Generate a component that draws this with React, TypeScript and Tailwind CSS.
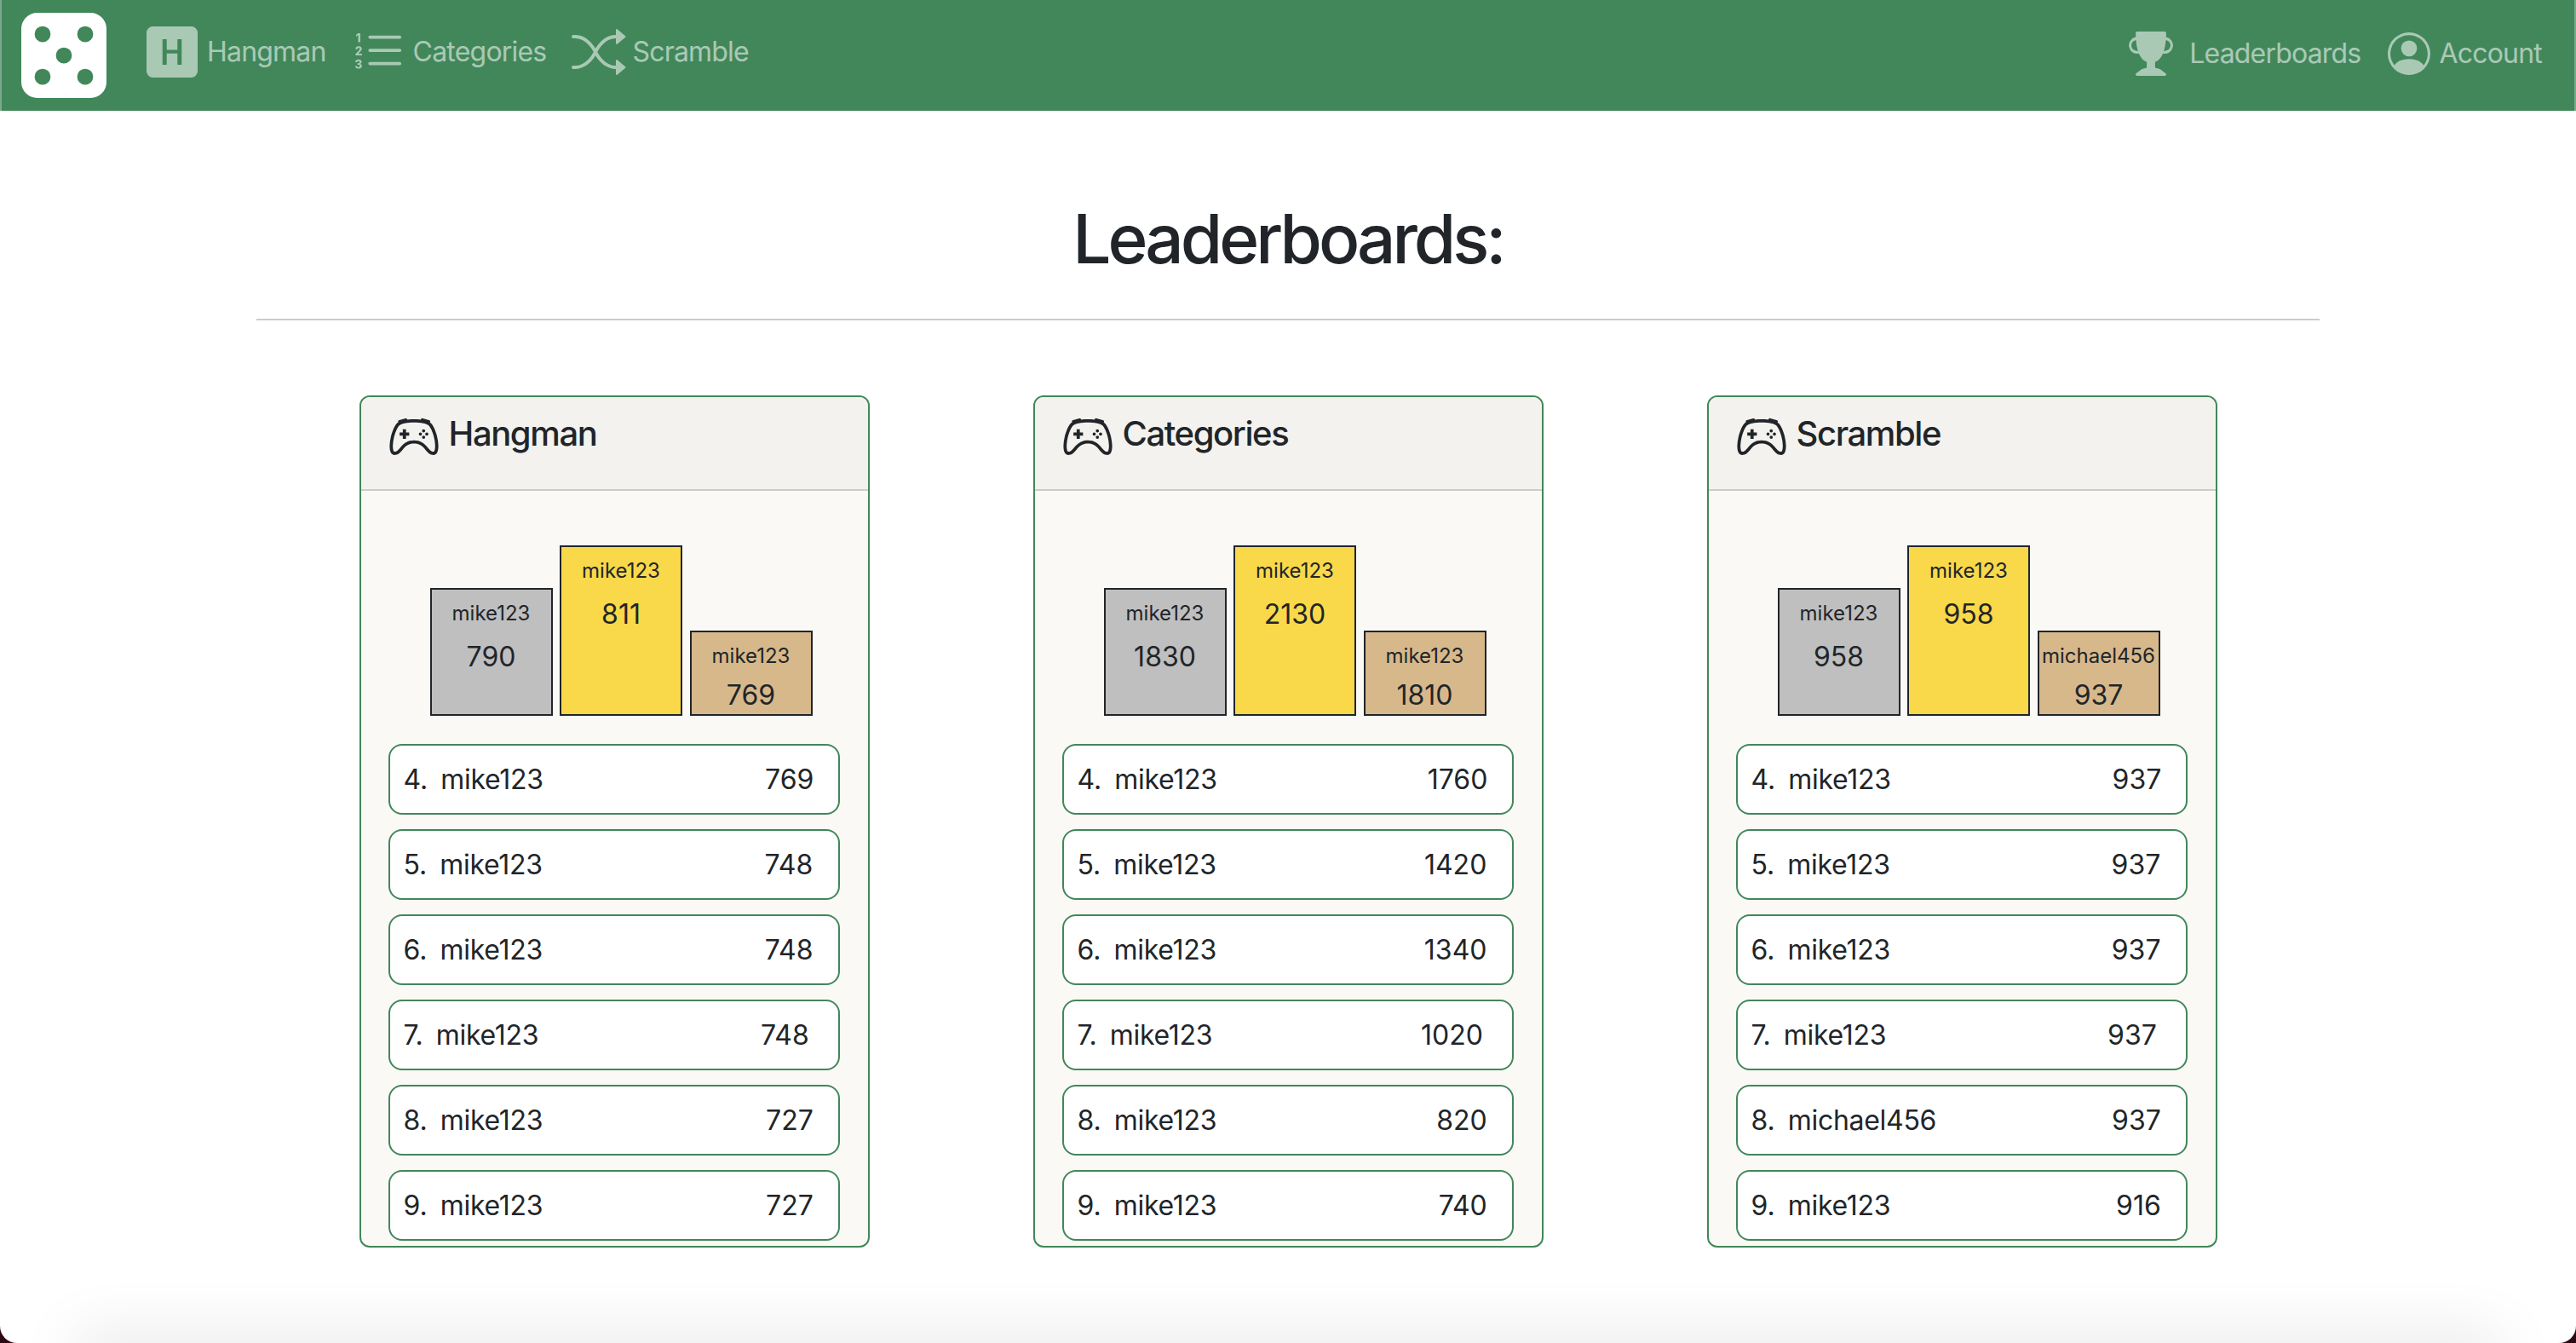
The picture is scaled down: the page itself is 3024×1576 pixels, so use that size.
import React from 'react'
import {
  BsController,
  BsDice5Fill,
  BsHSquareFill,
  BsListOl,
  BsPersonCircle,
  BsShuffle,
  BsTrophyFill,
} from 'react-icons/bs'

type Entry = { rank: number; name: string; score: number }
type Board = { title: string; podium: { name: string; score: number }[]; rows: Entry[] }

const boards: Board[] = [
  {
    title: 'Hangman',
    podium: [
      { name: 'mike123', score: 790 },
      { name: 'mike123', score: 811 },
      { name: 'mike123', score: 769 },
    ],
    rows: [
      { rank: 4, name: 'mike123', score: 769 },
      { rank: 5, name: 'mike123', score: 748 },
      { rank: 6, name: 'mike123', score: 748 },
      { rank: 7, name: 'mike123', score: 748 },
      { rank: 8, name: 'mike123', score: 727 },
      { rank: 9, name: 'mike123', score: 727 },
    ],
  },
  {
    title: 'Categories',
    podium: [
      { name: 'mike123', score: 1830 },
      { name: 'mike123', score: 2130 },
      { name: 'mike123', score: 1810 },
    ],
    rows: [
      { rank: 4, name: 'mike123', score: 1760 },
      { rank: 5, name: 'mike123', score: 1420 },
      { rank: 6, name: 'mike123', score: 1340 },
      { rank: 7, name: 'mike123', score: 1020 },
      { rank: 8, name: 'mike123', score: 820 },
      { rank: 9, name: 'mike123', score: 740 },
    ],
  },
  {
    title: 'Scramble',
    podium: [
      { name: 'mike123', score: 958 },
      { name: 'mike123', score: 958 },
      { name: 'michael456', score: 937 },
    ],
    rows: [
      { rank: 4, name: 'mike123', score: 937 },
      { rank: 5, name: 'mike123', score: 937 },
      { rank: 6, name: 'mike123', score: 937 },
      { rank: 7, name: 'mike123', score: 937 },
      { rank: 8, name: 'michael456', score: 937 },
      { rank: 9, name: 'mike123', score: 916 },
    ],
  },
]

const medals = [
  { box: 'h-[150px] bg-[#bfbfbf]', score: 'mt-[15px]' },
  { box: 'h-[200px] bg-[#f9d84a]', score: 'mt-[15px]' },
  { box: 'h-[100px] bg-[#d7b88b]', score: 'mt-[10px]' },
]

const NavItem = ({ icon, label, gap }: { icon: React.ReactNode; label: string; gap: string }) => (
  <div className={`flex items-center ${gap}`}>
    {icon}
    <span>{label}</span>
  </div>
)

const LeaderCard = ({ board }: { board: Board }) => (
  <div className="w-[599px] h-[1000px] border-2 border-[#41875a] rounded-[12px] bg-[#faf9f5] overflow-hidden">
    <div className="h-[110px] pl-[32px] pt-[17px] flex items-start gap-[11px] bg-[#f3f2ee] border-b-2 border-[#cccccb]">
      <BsController className="w-[60px] h-[60px]" />
      <h4 className="mt-[2px] text-[40px] leading-[48px] font-medium tracking-[-1.4px]">{board.title}</h4>
    </div>
    <div className="pl-[32px] pr-[33px] pt-[64px]">
      <div className="h-[200px] ml-[49px] flex items-end gap-[8.5px]">
        {board.podium.map((p, i) => (
          <div
            key={i}
            className={`w-[144px] border-2 border-[#212529] pt-[10px] text-center ${medals[i].box}`}
          >
            <div className="text-[24px] leading-[36px]">{p.name}</div>
            <div className={`text-[32px] leading-[36px] ${medals[i].score}`}>{p.score}</div>
          </div>
        ))}
      </div>
      <div className="mt-[33px] flex flex-col gap-[17px]">
        {board.rows.map((r) => (
          <div
            key={r.rank}
            className="h-[83px] pl-[16px] flex items-center border-2 border-[#41875a] rounded-[16px] bg-white text-[32px]"
          >
            <span className="mr-[15px]">{r.rank}.</span>
            <span className="w-[302px] tracking-[-0.3px]">{r.name}</span>
            <span className="w-[136px] text-right">{r.score}</span>
          </div>
        ))}
      </div>
    </div>
  </div>
)

export default function App() {
  return (
    <div className="w-[3024px] h-[1576px] bg-[#2b0a16]">
      <div className="relative w-full h-full overflow-hidden rounded-b-[20px] bg-white text-[#212529] font-['Inter',sans-serif]">
        <nav className="h-[130px] pl-[23px] pr-[38px] flex items-center border-x-2 border-[#7aa98b] bg-[#41875a] text-[32px] tracking-[-0.8px] text-white/55">
          <BsDice5Fill className="w-[100px] h-[100px] text-white mr-[47px]" />
          <div className="flex items-center gap-[30px] -mt-[8px]">
            <NavItem icon={<BsHSquareFill className="w-[60px] h-[60px]" />} label="Hangman" gap="gap-[11px]" />
            <NavItem icon={<BsListOl className="w-[62px] h-[62px]" />} label="Categories" gap="gap-[10px]" />
            <NavItem icon={<BsShuffle className="w-[64px] h-[64px]" />} label="Scramble" gap="gap-[7px]" />
          </div>
          <div className="ml-auto flex items-center gap-[32px] -mt-[4px]">
            <NavItem icon={<BsTrophyFill className="w-[52px] h-[52px]" />} label="Leaderboards" gap="gap-[19px]" />
            <NavItem icon={<BsPersonCircle className="w-[50px] h-[50px]" />} label="Account" gap="gap-[10px]" />
          </div>
        </nav>
        <main className="pt-[102px] flex flex-col items-center">
          <h1 className="text-[80px] leading-[96px] font-medium tracking-[-4px]">Leaderboards:</h1>
          <hr className="w-[2422px] mt-[46px] border-t-2 border-[#cbcbcb]" />
          <div className="mt-[88px] flex justify-center gap-[192px]">
            {boards.map((b) => (
              <LeaderCard key={b.title} board={b} />
            ))}
          </div>
        </main>
        <div className="absolute left-[90px] right-[90px] top-full h-[20px] shadow-[0_0_70px_rgba(0,0,0,0.22)]" />
      </div>
    </div>
  )
}
